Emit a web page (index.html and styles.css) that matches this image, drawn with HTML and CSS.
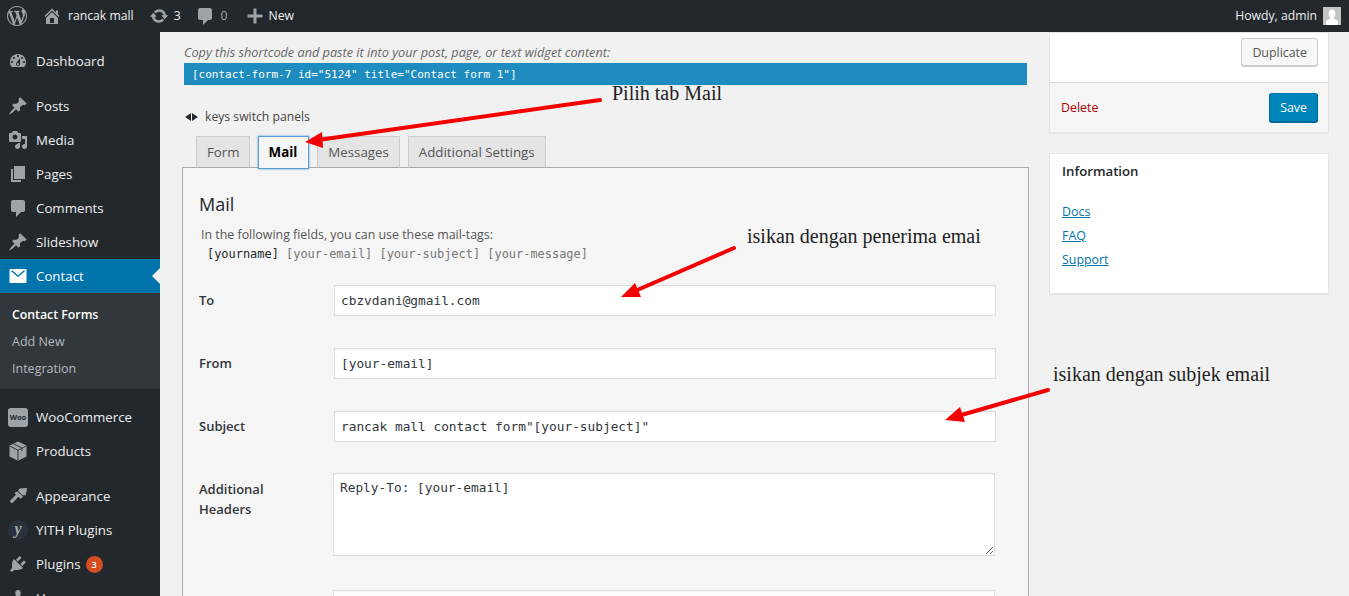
FILE: index.html
```html
<!DOCTYPE html>
<html lang="en">
<head>
<meta charset="utf-8">
<title>Edit Contact Form</title>
<link rel="stylesheet" href="styles.css">
</head>
<body>
<header class="adminbar">
  <div class="bar-left">
    <svg class="ab-icon ab-wp" viewBox="0 0 20 20"><path d="M20 10c0-5.51-4.49-10-10-10C4.48 0 0 4.49 0 10c0 5.52 4.48 10 10 10 5.51 0 10-4.48 10-10zM7.78 15.37L4.37 6.22c.55-.02 1.17-.08 1.17-.08.5-.06.44-1.13-.06-1.11 0 0-1.45.11-2.37.11-.18 0-.37 0-.58-.01C4.12 2.69 6.87 1.11 10 1.11c2.33 0 4.45.87 6.05 2.34-.68-.11-1.65.39-1.65 1.58 0 .74.45 1.36.9 2.1.35.61.55 1.36.55 2.46 0 1.49-1.4 5-1.4 5l-3.03-8.37c.54-.02.82-.17.82-.17.5-.05.44-1.25-.06-1.22 0 0-1.44.12-2.38.12-.87 0-2.33-.12-2.33-.12-.5-.03-.56 1.2-.06 1.22l.92.08 1.26 3.41zM17.41 10c.24-.64.74-1.87.43-4.25.7 1.29 1.05 2.71 1.05 4.25 0 3.29-1.73 6.24-4.4 7.78.97-2.59 1.94-5.2 2.92-7.78zM6.1 18.09C3.12 16.65 1.11 13.53 1.11 10c0-1.3.23-2.48.72-3.59C3.25 10.3 4.67 14.2 6.1 18.09zm4.03-6.63l2.58 6.98c-.86.29-1.76.45-2.71.45-.79 0-1.57-.11-2.29-.33.81-2.38 1.62-4.74 2.42-7.1z"/></svg>
    <svg class="ab-icon ab-home" viewBox="0 0 20 20"><path d="M16 8.5l1.53 1.53-1.06 1.06L10 4.62l-6.47 6.47-1.06-1.06L10 2.5l4 4v-2h2v4zm-6-2.46l6 5.99V18H4v-5.97zM12 17v-5H8v5h4z"/></svg>
    <span class="ab-site">rancak mall</span>
    <svg class="ab-icon ab-updates" viewBox="0 0 20 20"><path d="M10.2 3.28c3.53 0 6.43 2.61 6.92 6h2.08l-3.5 4-3.5-4h2.32c-.45-1.97-2.21-3.45-4.32-3.45-1.45 0-2.73.71-3.54 1.78L4.95 5.66C6.23 4.2 8.11 3.28 10.2 3.28zm-.4 13.44c-3.52 0-6.43-2.61-6.92-6H.8l3.5-4c1.17 1.33 2.33 2.67 3.5 4H5.48c.45 1.97 2.21 3.45 4.32 3.45 1.45 0 2.73-.71 3.54-1.78l1.71 1.95c-1.28 1.46-3.15 2.38-5.25 2.38z"/></svg>
    <span class="ab-count">3</span>
    <svg class="ab-icon ab-comment" viewBox="0 0 20 20"><path d="M5 2h10c1.1 0 2 .9 2 2v8c0 1.1-.9 2-2 2h-2l-5 5v-5H5c-1.1 0-2-.9-2-2V4c0-1.1.9-2 2-2z"/></svg>
    <span class="ab-zero">0</span>
    <svg class="ab-icon ab-plus" viewBox="0 0 20 20"><path d="M17.500 8.500v3h-6v6h-3v-6h-6v-3h6v-6h3v6z"/></svg>
    <span class="ab-new">New</span>
  </div>
  <div class="bar-right">
    <span>Howdy, admin</span>
    <svg class="avatar" viewBox="0 0 18 18"><rect width="18" height="18" fill="#c4c4c4"/><path fill="#fff" d="M9 2.600c2.200 0 3.400 1.700 3.400 3.900 0 1.700-.8 3.200-1.700 4v1.100l4.300 2.200V18H3v-4.200l4.300-2.200v-1.100c-.9-.8-1.700-2.300-1.700-4C5.600 4.300 6.800 2.600 9 2.600z"/></svg>
  </div>
</header>

<div class="layout">
  <nav class="sidebar">
    <ul class="menu">
      <li class="item"><svg class="m-icon" viewBox="0 0 20 20"><path d="M3.76 16h12.48c1.1-1.37 1.76-3.11 1.76-5 0-4.42-3.58-8-8-8s-8 3.58-8 8c0 1.89.66 3.63 1.76 5zM10 4c.55 0 1 .45 1 1s-.45 1-1 1-1-.45-1-1 .45-1 1-1zM6 6c.55 0 1 .45 1 1s-.45 1-1 1-1-.45-1-1 .45-1 1-1zm8 0c.55 0 1 .45 1 1s-.45 1-1 1-1-.45-1-1 .45-1 1-1zm-5.37 5.55L12 7v6c0 1.1-.9 2-2 2s-2-.9-2-2c0-.57.24-1.08.63-1.45zM4 10c.55 0 1 .45 1 1s-.45 1-1 1-1-.45-1-1 .45-1 1-1zm12 0c.55 0 1 .45 1 1s-.45 1-1 1-1-.45-1-1 .45-1 1-1zm-5 3c0-.55-.45-1-1-1s-1 .45-1 1 .45 1 1 1 1-.45 1-1z"/></svg>Dashboard</li>
      <li class="sep"></li>
      <li class="item"><svg class="m-icon" viewBox="0 0 20 20"><path d="M10.44 3.02l1.82-1.82 6.36 6.35-1.83 1.82c-1.05-.68-2.48-.57-3.41.36l-.75.75c-.92.93-1.04 2.35-.35 3.41l-1.83 1.82-2.41-2.41-2.8 2.79c-.42.42-3.38 2.71-3.8 2.29s1.86-3.39 2.28-3.81l2.79-2.79L4.1 9.36l1.83-1.82c1.05.69 2.48.57 3.4-.36l.75-.75c.93-.92 1.05-2.35.36-3.41z"/></svg>Posts</li>
      <li class="item"><svg class="m-icon" viewBox="0 0 20 20"><path d="M13 11V4c0-.55-.45-1-1-1h-1.67L9 1H5L3.67 3H2c-.55 0-1 .45-1 1v7c0 .55.45 1 1 1h10c.55 0 1-.45 1-1zM7 4.5c1.38 0 2.5 1.12 2.5 2.5S8.38 9.5 7 9.5 4.5 8.38 4.5 7 5.62 4.5 7 4.5zM14 6h5v10.5c0 1.38-1.12 2.5-2.5 2.5S14 17.88 14 16.5s1.12-2.5 2.5-2.5c.17 0 .34.02.5.05V9h-3V6zm-4 8.05V13h2v3.5c0 1.38-1.12 2.5-2.5 2.5S7 17.88 7 16.5 8.12 14 9.5 14c.17 0 .34.02.5.05z"/></svg>Media</li>
      <li class="item"><svg class="m-icon" viewBox="0 0 20 20"><path d="M6 15V2h11v13H6zm-1 1h8v2H3V5h2v11z"/></svg>Pages</li>
      <li class="item"><svg class="m-icon" viewBox="0 0 20 20"><path d="M5 2h10c1.1 0 2 .9 2 2v8c0 1.1-.9 2-2 2h-2l-5 5v-5H5c-1.1 0-2-.9-2-2V4c0-1.1.9-2 2-2z"/></svg>Comments</li>
      <li class="item"><svg class="m-icon" viewBox="0 0 20 20"><path d="M10.44 3.02l1.82-1.82 6.36 6.35-1.83 1.82c-1.05-.68-2.48-.57-3.41.36l-.75.75c-.92.93-1.04 2.35-.35 3.41l-1.83 1.82-2.41-2.41-2.8 2.79c-.42.42-3.38 2.71-3.8 2.29s1.86-3.39 2.28-3.81l2.79-2.79L4.1 9.36l1.83-1.82c1.05.69 2.48.57 3.4-.36l.75-.75c.93-.92 1.05-2.35.36-3.41z"/></svg>Slideshow</li>
      <li class="item current"><svg class="m-icon" viewBox="0 0 20 20"><path d="M2.500 3h15c.6 0 1 .4 1 1v12c0 .6-.4 1-1 1h-15c-.6 0-1-.4-1-1V4c0-.6.4-1 1-1zm.6 2.200L10 11l6.900-5.800-.9-1L10 9.200 4 4.200z" fill-rule="evenodd"/></svg>Contact</li>
      <li class="submenu">
        <div class="sub-item sub-current">Contact Forms</div>
        <div class="sub-item">Add New</div>
        <div class="sub-item">Integration</div>
      </li>
      <li class="sep"></li>
      <li class="item"><span class="woo">Woo</span>WooCommerce</li>
      <li class="item"><svg class="m-icon" viewBox="0 0 20 20"><path d="M10 0.500l8.500 4v11L10 19.800 1.500 15.500v-11z"/><path class="m-line" d="M1.800 5L10 9.300 18.200 5M10 9.300v10M5.500 2.800l8.500 4.200v3"/></svg>Products</li>
      <li class="sep"></li>
      <li class="item"><svg class="m-icon" viewBox="0 0 20 20"><path d="M11.500 2.500l7.700-.5-1.700 7.800-1.500-1-1 1-5-4.800zM9.100 5.500l5.900 5.100-1.300 1.500c-.5.5-1.100.5-1.600.1l-1.700-1.500-5.400 5.700c-.6.7-1.600.8-2.300.2-.8-.6-.8-1.600-.2-2.300l5.500-5.500-.8-.8c-.4-.4-.5-1.100 0-1.500z"/></svg>Appearance</li>
      <li class="item"><span class="yith">y</span>YITH Plugins</li>
      <li class="item"><svg class="m-icon" viewBox="0 0 20 20"><path d="M13.11 4.36L9.87 7.6 8 5.73l3.24-3.24c.35-.34 1.05-.2 1.56.32.52.51.66 1.21.31 1.55zm-8 1.77l.91-1.12 9.01 9.01-1.19.84c-.71.71-2.63 1.16-3.82 1.16H6.14L4.9 17.26c-.59.59-1.54.59-2.12 0-.59-.58-.59-1.53 0-2.12l1.24-1.24v-3.88c0-1.13.4-3.19 1.09-3.89zm7.26 3.97l3.24-3.24c.34-.35 1.04-.21 1.55.31.52.51.66 1.21.31 1.55l-3.24 3.25z"/></svg>Plugins<span class="badge">3</span></li>
      <li class="item"><svg class="m-icon" viewBox="0 0 20 20"><path d="M10 9.25c-2.27 0-2.73-3.44-2.73-3.44C7 4.02 7.82 2 9.97 2c2.16 0 2.98 2.02 2.71 3.81 0 0-.41 3.44-2.68 3.44zm0 2.57L12.72 10c2.39 0 4.52 2.33 4.52 4.53v2.49s-3.65 1.13-7.24 1.13c-3.65 0-7.24-1.13-7.24-1.13v-2.49c0-2.25 1.94-4.48 4.47-4.48z"/></svg>Users</li>
    </ul>
  </nav>

  <main class="main">
    <section class="editor">
      <div class="shortcode">
        <p class="shortcode-hint">Copy this shortcode and paste it into your post, page, or text widget content:</p>
        <div class="shortcode-code">[contact-form-7 id="5124" title="Contact form 1"]</div>
      </div>
      <p class="keys"><span class="keys-arrows"><i class="tri-left"></i><i class="tri-right"></i></span>keys switch panels</p>
      <div class="tabs">
        <span class="tab tab-first">Form</span>
        <span class="tab tab-active">Mail</span>
        <span class="tab">Messages</span>
        <span class="tab">Additional Settings</span>
      </div>
      <div class="panel">
        <h2 class="panel-title">Mail</h2>
        <p class="panel-intro">In the following fields, you can use these mail-tags:</p>
        <p class="mailtags"><b>[yourname]</b> [your-email] [your-subject] [your-message]</p>
        <div class="fields">
          <label class="f-label">To</label>
          <input class="f-input" type="text" value="cbzvdani@gmail.com">
          <label class="f-label">From</label>
          <input class="f-input" type="text" value="[your-email]">
          <label class="f-label">Subject</label>
          <input class="f-input" type="text" value='rancak mall contact form"[your-subject]"'>
          <label class="f-label f-label-area">Additional Headers</label>
          <textarea class="f-area">Reply-To: [your-email]</textarea>
          <span></span>
          <textarea class="f-area f-area-next"></textarea>
        </div>
      </div>
    </section>

    <aside class="side">
      <div class="box">
        <div class="box-top"><span class="btn">Duplicate</span></div>
        <div class="box-foot"><span class="delete">Delete</span><span class="btn btn-primary">Save</span></div>
      </div>
      <div class="box info">
        <h3 class="info-title">Information</h3>
        <a class="info-link" href="#">Docs</a>
        <a class="info-link" href="#">FAQ</a>
        <a class="info-link" href="#">Support</a>
      </div>
    </aside>
  </main>
</div>

<svg class="arrows" viewBox="0 0 1349 596" width="1349" height="596">
  <g class="arrow">
    <line x1="600" y1="100" x2="318" y2="140"/>
    <polygon points="305,142 322,132 323,148"/>
    <line x1="734" y1="248" x2="635" y2="291"/>
    <polygon points="621,297 635,283 641,297"/>
    <line x1="1048" y1="390" x2="958" y2="416"/>
    <polygon points="945,420 960,407 965,422"/>
  </g>
</svg>
<span class="note note-1">Pilih tab Mail</span>
<span class="note note-2">isikan dengan penerima emai</span>
<span class="note note-3">isikan dengan subjek email</span>
</body>
</html>
```
FILE: styles.css
```css
* { box-sizing: border-box; }
html, body { margin: 0; height: 100%; overflow: hidden; }
body {
  font-family: "Open Sans", sans-serif;
  font-size: 12.4px;
  line-height: 18px;
  color: #444;
  background: #f1f1f1;
  position: relative;
}
p, h2, h3, ul { margin: 0; padding: 0; }

.adminbar {
  height: 32px;
  background: #23282d;
  color: #eee;
  display: flex;
  justify-content: space-between;
  align-items: center;
  padding: 0 8px 0 7px;
  font-size: 12.2px;
}
.bar-left, .bar-right { display: flex; align-items: center; }
.ab-icon { fill: #9ea3a8; flex: none; }
.ab-wp { width: 20px; height: 20px; }
.ab-home { width: 20px; height: 20px; margin-left: 15px; }
.ab-site { margin-left: 6px; }
.ab-updates { width: 20px; height: 20px; margin-left: 15px; }
.ab-count { margin-left: 5px; }
.ab-comment { width: 20px; height: 20px; margin-left: 14px; }
.ab-zero { margin-left: 6px; color: #9ea3a8; }
.ab-plus { width: 20px; height: 20px; margin-left: 17px; }
.ab-new { margin-left: 4px; }
.avatar { width: 18px; height: 18px; margin-left: 6px; }

.layout { display: flex; height: calc(100% - 32px); }

.sidebar {
  width: 160px;
  flex: none;
  background: #23282d;
  color: #eee;
  padding-top: 12px;
  overflow: hidden;
}
.menu { list-style: none; }
.item {
  height: 34px;
  display: flex;
  align-items: center;
  font-size: 13.3px;
  position: relative;
  padding-left: 8px;
}
.m-icon { width: 20px; height: 20px; fill: #9ea3a8; margin-right: 8px; flex: none; }
.m-line { fill: none; stroke: #23282d; stroke-width: .9; }
.sep { height: 11px; }
.current { background: #0073aa; color: #fff; }
.current .m-icon { fill: #fff; }
.current::after {
  content: "";
  position: absolute;
  right: 0;
  top: 9px;
  border: 8px solid transparent;
  border-right-color: #f1f1f1;
  border-left-width: 0;
}
.submenu { background: #32373c; padding: 8px 0 7px; }
.sub-item { height: 27px; line-height: 27px; padding-left: 12px; color: #b4b9be; font-size: 12.5px; }
.sub-current { color: #fff; font-weight: 600; font-size: 12.3px; }
.woo {
  width: 20px;
  height: 19px;
  margin-right: 8px;
  background: #9ea3a8;
  border-radius: 3px;
  color: #23282d;
  font-size: 7.5px;
  font-weight: 700;
  line-height: 18px;
  text-align: center;
  flex: none;
}
.yith {
  width: 20px;
  height: 20px;
  margin-right: 8px;
  border-radius: 50%;
  background: #2a323b;
  color: #a5aaaf;
  font-family: "Liberation Serif", serif;
  font-style: italic;
  font-weight: 700;
  font-size: 16px;
  line-height: 17px;
  text-align: center;
  flex: none;
}
.badge {
  width: 17px;
  height: 17px;
  margin-left: 5px;
  border-radius: 50%;
  background: #d54e21;
  color: #fff;
  font-size: 9px;
  font-weight: 600;
  line-height: 17px;
  text-align: center;
}

.main {
  flex: 1;
  min-width: 0;
  display: flex;
  align-items: flex-start;
  gap: 20px;
  padding: 0 20px 0 22px;
}
.editor { width: 847px; flex: none; }
.shortcode { padding: 11px 2px 0; }
.shortcode-hint { font-style: italic; color: #666; font-size: 12.7px; }
.shortcode-code {
  margin-top: 2px;
  height: 22px;
  padding: 1px 0 0 8px;
  background: #1e8cbe;
  color: #fff;
  font-family: "DejaVu Sans Mono", monospace;
  font-size: 11px;
  line-height: 21px;
}
.keys { margin-top: 23px; padding-left: 3px; display: flex; align-items: center; font-size: 12.2px; }
.keys-arrows { display: flex; gap: 1px; margin-right: 7px; }
.tri-left, .tri-right { width: 0; height: 0; border: 4.5px solid transparent; }
.tri-left { border-right: 6px solid #23282d; border-left-width: 0; }
.tri-right { border-left: 6px solid #23282d; border-right-width: 0; }

.tabs { display: flex; gap: 8px; margin-top: 10px; padding-left: 14px; align-items: flex-end; position: relative; z-index: 1; margin-bottom: -1px; }
.tab {
  height: 32px;
  padding: 0 10px;
  border: 1px solid #ccc;
  border-bottom-color: #aaa;
  background: #e4e4e4;
  color: #555;
  font-size: 13.3px;
  line-height: 31px;
}
.tab-first { padding-right: 9px; }
.tab-active {
  height: 33px;
  padding-right: 11px;
  background: #f5f5f5;
  color: #000;
  font-weight: 700;
  border: 1px solid #5b9dd9;
  box-shadow: 0 0 2px rgba(30,140,190,.8);
  margin-bottom: -1px;
}
.panel {
  border: 1px solid #aaa;
  background: #f5f5f5;
  padding: 24px 32px 0 16px;
  height: 600px;
}
.panel-title { font-size: 18px; font-weight: 400; line-height: 24px; color: #23282d; }
.panel-intro { margin-top: 10px; padding-left: 2px; color: #555; }
.mailtags {
  margin-top: 1px;
  padding-left: 8px;
  font-family: "DejaVu Sans Mono", monospace;
  font-size: 11.95px;
  color: #777;
}
.mailtags b { font-weight: 400; color: #23282d; }
.fields {
  margin-top: 22px;
  display: grid;
  grid-template-columns: 135px 662px;
  row-gap: 32px;
  align-items: start;
}
.f-label { font-size: 13px; font-weight: 600; color: #32373c; line-height: 20px; padding-top: 5px; }
.f-label-area { padding-right: 60px; }
.f-input {
  height: 31px;
  width: 100%;
  margin: 0;
  padding: 0 6px;
  border: 1px solid #ddd;
  background: #fff;
  color: #32373c;
  font-family: "DejaVu Sans Mono", monospace;
  font-size: 12.8px;
  outline: 0;
  box-shadow: inset 0 1px 2px rgba(0,0,0,.04);
}
.f-area {
  display: block;
  width: 100%;
  height: 83px;
  margin: -1px 0 0 -1px;
  padding: 5px 6px;
  border: 1px solid #ddd;
  background: #fff;
  color: #32373c;
  font-family: "DejaVu Sans Mono", monospace;
  font-size: 12.8px;
  line-height: 18px;
  outline: 0;
  box-shadow: inset 0 1px 2px rgba(0,0,0,.04);
}
.f-area-next { margin-top: 2px; }

.side { width: 280px; flex: none; display: flex; flex-direction: column; gap: 20px; }
.box { background: #fff; border: 1px solid #e5e5e5; box-shadow: 0 1px 1px rgba(0,0,0,.04); }
.box-top { height: 50px; display: flex; align-items: flex-start; justify-content: flex-end; padding: 5px 10px 0 0; border-bottom: 1px solid #ddd; }
.box-foot { height: 49px; display: flex; align-items: center; justify-content: space-between; padding: 0 10px 0 11px; background: #f5f5f5; }
.btn {
  height: 28px;
  padding: 0 10px;
  border: 1px solid #ccc;
  border-radius: 3px;
  background: #f7f7f7;
  box-shadow: 0 1px 0 #ccc;
  color: #555;
  line-height: 28px;
}
.btn-primary {
  height: 29px;
  background: #0085ba;
  border-color: #0073aa #006799 #006799;
  box-shadow: 0 1px 0 #006799;
  color: #fff;
  line-height: 27px;
}
.delete { color: #a00; }
.info { height: 141px; padding: 7px 12px 0; display: flex; flex-direction: column; align-items: flex-start; }
.info-title { font-size: 13.2px; font-weight: 600; line-height: 20px; color: #23282d; margin-bottom: 21px; }
.info-link { color: #0073aa; height: 24px; line-height: 20px; }

.arrows { position: absolute; left: 0; top: 0; z-index: 2; pointer-events: none; }
.arrow line { stroke: #f40000; stroke-width: 4; stroke-linecap: round; }
.arrow polygon { fill: #f40000; }
.note {
  position: absolute;
  z-index: 2;
  font-family: "Liberation Serif", serif;
  font-size: 20px;
  line-height: 24px;
  color: #222;
  white-space: nowrap;
}
.note-1 { left: 612px; top: 81px; }
.note-2 { left: 747px; top: 224px; }
.note-3 { left: 1053px; top: 362px; }
```
